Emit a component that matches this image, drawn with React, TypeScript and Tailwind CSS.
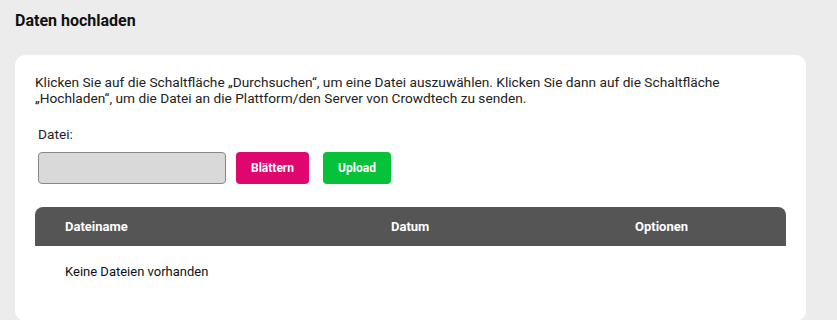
export default function App() {
  return (
    <div className="min-h-[320px] w-full bg-[#ececec] px-[15px] pt-[10px] text-[#222] font-['Roboto',sans-serif]">
      <h1 className="text-[16px] font-bold leading-[22px] text-[#111]">Daten hochladen</h1>
      <div className="mt-[23px] mr-[16px] rounded-[10px] bg-white px-[20px] pt-[19px] pb-[41px]">
        <p className="text-[13.7px] leading-[16px] text-[#222]">
          Klicken Sie auf die Schaltfläche „Durchsuchen“, um eine Datei auszuwählen. Klicken Sie dann auf die Schaltfläche
          <br />
          „Hochladen“, um die Datei an die Plattform/den Server von Crowdtech zu senden.
        </p>
        <div className="mt-[20px] pl-[3px] text-[13.7px] leading-[16px]">Datei:</div>
        <div className="mt-[10px] flex items-center pl-[3px]">
          <div className="h-[32px] w-[188px] rounded-[4px] border border-[#888] bg-[#d9d9d9]" />
          <button className="ml-[10px] h-[32px] w-[73px] rounded-[4px] bg-[#e0066f] text-[12px] font-bold text-white">
            Blättern
          </button>
          <button className="ml-[14px] h-[32px] w-[68px] rounded-[4px] bg-[#06c13a] text-[12px] font-bold text-white">
            Upload
          </button>
        </div>
        <div className="mt-[23px] grid h-[39px] grid-cols-[326px_244px_1fr] items-center rounded-t-[8px] bg-[#555] pl-[30px] text-[13px] font-bold text-white">
          <div>Dateiname</div>
          <div>Datum</div>
          <div>Optionen</div>
        </div>
        <div className="pl-[30px] pt-[18px] text-[13px] leading-[16px] text-[#111]">Keine Dateien vorhanden</div>
      </div>
    </div>
  );
}
